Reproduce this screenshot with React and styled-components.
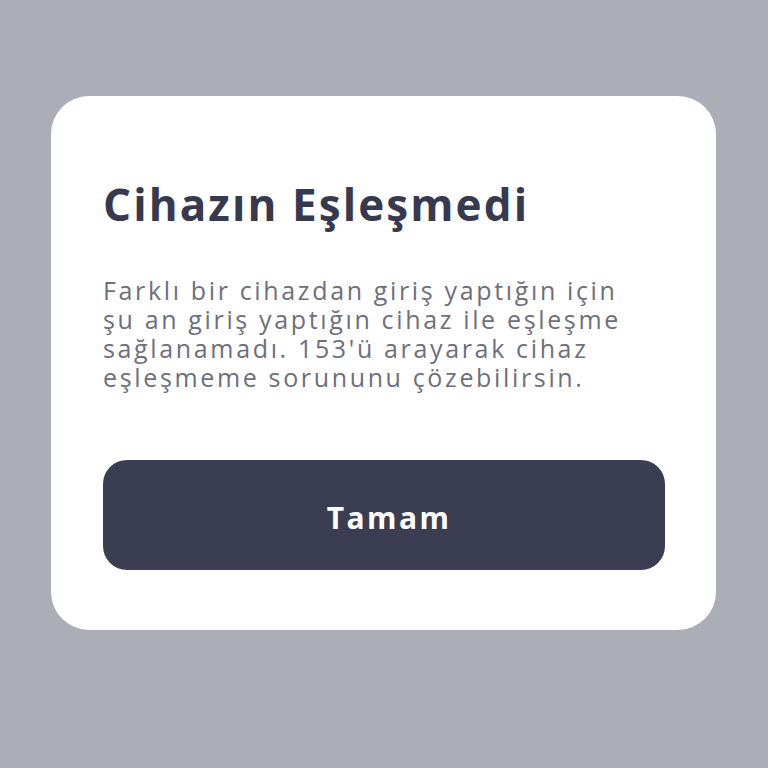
import styled, { createGlobalStyle } from "styled-components";

const Global = createGlobalStyle`
  html, body {
    margin: 0;
    padding: 0;
    background: #abaeb6;
  }
  body {
    font-family: "Open Sans", "Noto Sans", sans-serif;
  }
`;

const Screen = styled.div`
  width: 768px;
  height: 768px;
  box-sizing: border-box;
  padding: 96px 52px 0 51px;
  background: #abaeb6;
`;

const Card = styled.div`
  box-sizing: border-box;
  height: 534px;
  background: #ffffff;
  border-radius: 38px;
  padding: 78px 51px 0 52px;
`;

const Title = styled.h1`
  margin: 0;
  font-size: 44px;
  font-weight: 700;
  line-height: 60px;
  color: #373a4f;
  letter-spacing: 2.1px;
`;

const Body = styled.p`
  margin: 42px 0 0;
  font-size: 25px;
  line-height: 29px;
  color: #6d6f7b;
  letter-spacing: 2.65px;
  white-space: nowrap;
`;

const Button = styled.button`
  display: flex;
  align-items: center;
  justify-content: center;
  width: 100%;
  height: 110px;
  margin-top: 68px;
  border: none;
  border-radius: 24px;
  background: #3b3e53;
  color: #ffffff;
  font-family: "Open Sans", sans-serif;
  font-size: 30px;
  font-weight: 700;
  letter-spacing: 2.4px;
  padding: 4px 0 0 10px;
`;

export default function App() {
  return (
    <Screen>
      <Global />
      <Card>
        <Title>Cihazın Eşleşmedi</Title>
        <Body>
          Farklı bir cihazdan giriş yaptığın için
          <br />
          şu an giriş yaptığın cihaz ile eşleşme
          <br />
          sağlanamadı. 153'ü arayarak cihaz
          <br />
          eşleşmeme sorununu çözebilirsin.
        </Body>
        <Button>Tamam</Button>
      </Card>
    </Screen>
  );
}
